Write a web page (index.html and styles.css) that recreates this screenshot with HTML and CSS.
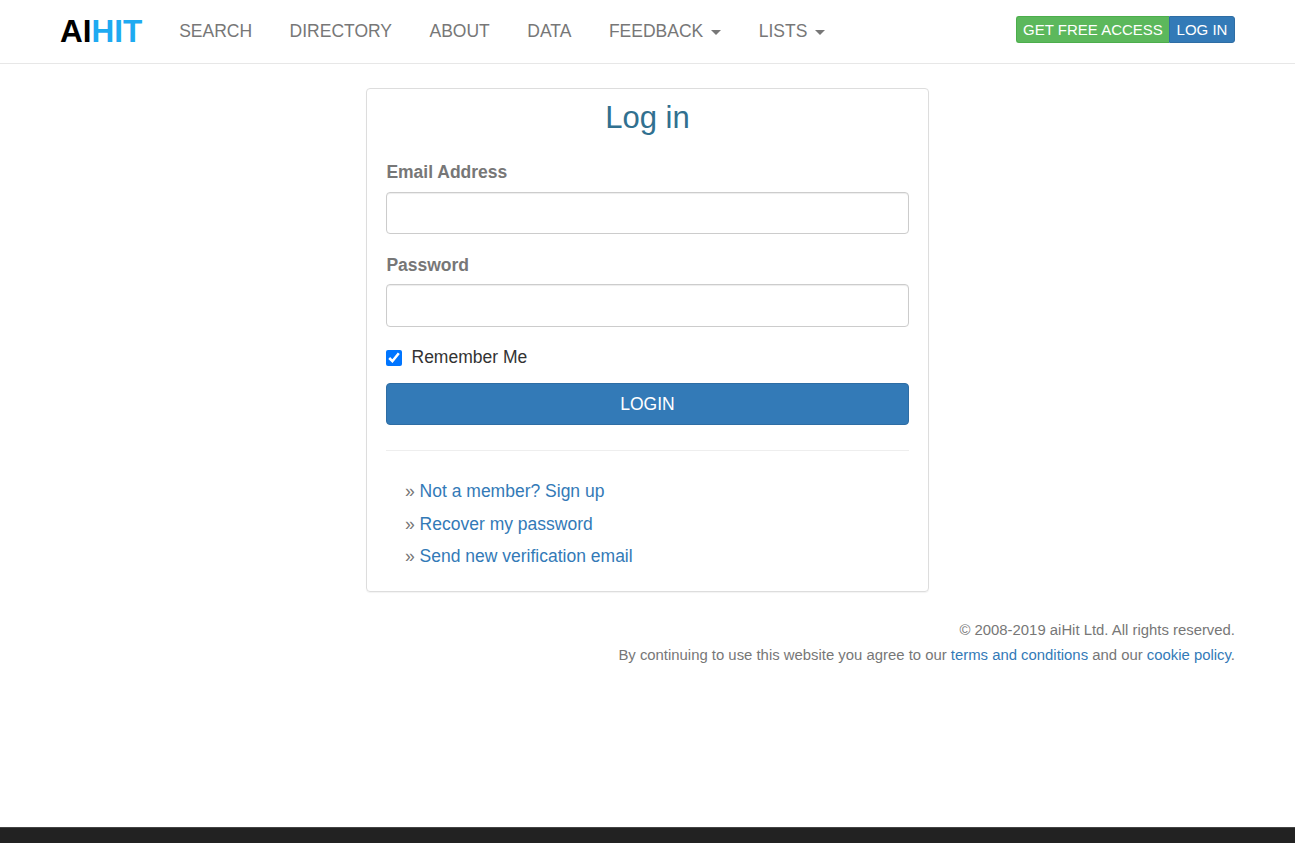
FILE: index.html
```html
<!DOCTYPE html>
<html lang="en">
<head>
<meta charset="utf-8">
<title>aiHit - Log in</title>
<link rel="stylesheet" href="styles.css">
</head>
<body>
<header class="navbar">
  <a class="brand" href="#">AI<span class="brand-accent">HIT</span></a>
  <nav class="nav">
    <a href="#">SEARCH</a>
    <a href="#">DIRECTORY</a>
    <a href="#">ABOUT</a>
    <a href="#">DATA</a>
    <a href="#">FEEDBACK<span class="caret"></span></a>
    <a href="#">LISTS<span class="caret"></span></a>
  </nav>
  <div class="actions">
    <a class="action signup" href="#">GET FREE ACCESS</a>
    <a class="action signin" href="#">LOG IN</a>
  </div>
</header>
<main class="panel">
  <h1 class="title">Log in</h1>
  <form>
    <label class="label" for="email">Email Address</label>
    <input class="field" id="email" type="text">
    <label class="label label-password" for="password">Password</label>
    <input class="field field-password" id="password" type="password">
    <label class="remember">
      <input class="check" type="checkbox" checked>
      <span>Remember Me</span>
    </label>
    <button class="submit" type="button">LOGIN</button>
  </form>
  <ul class="links">
    <li>» <a href="#">Not a member? Sign up</a></li>
    <li>» <a href="#">Recover my password</a></li>
    <li>» <a href="#">Send new verification email</a></li>
  </ul>
</main>
<footer class="legal">
  <p>© 2008-2019 aiHit Ltd. All rights reserved.</p>
  <p>By continuing to use this website you agree to our <a href="#">terms and conditions</a> and our <a href="#">cookie policy</a>.</p>
</footer>
<div class="bottom-bar"></div>
</body>
</html>
```
FILE: styles.css
```css
* { box-sizing: border-box; }
body {
  margin: 0;
  height: 843px;
  display: flex;
  flex-direction: column;
  overflow: hidden;
  background: #fff;
  color: #777;
  font: 17.5px/26px "Liberation Sans", Arial, sans-serif;
}
a { color: #337ab7; text-decoration: none; }
.navbar {
  height: 64px;
  padding: 0 60px;
  display: flex;
  border-bottom: 1px solid #e7e7e7;
}
.brand {
  width: 82px;
  color: #000;
  font-size: 31.5px;
  font-weight: bold;
  line-height: 62px;
}
.brand-accent { color: #1eaaf1; }
.nav { display: flex; margin-left: 18.4px; }
.nav a {
  display: flex;
  align-items: center;
  height: 61px;
  padding: 0 18.75px;
  color: #777;
}
.caret {
  margin: 3px 0 0 8px;
  border-top: 5px solid #777;
  border-left: 5px solid transparent;
  border-right: 5px solid transparent;
}
.actions { display: flex; margin: 16px 0 0 auto; height: 27px; }
.action {
  border: 1px solid;
  color: #fff;
  font-size: 15px;
  line-height: 26px;
  text-align: center;
  white-space: nowrap;
}
.signup { width: 153px; background: #5cb85c; border-color: #4cae4c; border-right: 0; border-radius: 3px 0 0 3px; }
.signin { width: 66px; background: #337ab7; border-color: #2e6da4; border-radius: 0 3px 3px 0; }
.panel {
  width: 563px;
  height: 504px;
  margin: 24px auto 0;
  padding: 10px 19px 0;
  border: 1px solid #ddd;
  border-radius: 4px;
  box-shadow: 0 1px 1px rgba(0, 0, 0, .05);
}
.title {
  margin: 0 0 22px;
  color: #31708f;
  font-size: 31px;
  font-weight: normal;
  line-height: 38px;
  text-align: center;
}
.label { display: block; margin-bottom: 7px; padding-left: .4px; font-weight: bold; }
.label-password { padding-top: 1px; margin-bottom: 6px; }
.field {
  display: block;
  width: 100%;
  height: 42px;
  margin: 0 0 17px;
  border: 1px solid #ccc;
  border-radius: 4px;
  box-shadow: inset 0 1px 1px rgba(0, 0, 0, .075);
}
.field-password { height: 43px; }
.remember { display: flex; align-items: center; height: 26px; color: #333; }
.check { width: 16px; height: 16px; margin: 2px 9.5px 0 0; }
.submit {
  display: block;
  width: 100%;
  height: 42px;
  margin: 13px 0 25px;
  border: 1px solid #2e6da4;
  border-radius: 4px;
  background: #337ab7;
  color: #fff;
  font: inherit;
}
.links {
  margin: 0;
  padding: 24px 19px 0;
  border-top: 1px solid #eee;
  list-style: none;
}
.links li { line-height: 32.5px; }
.legal {
  padding: 26px 60px 0 0;
  font-size: 14.88px;
  line-height: 25px;
  text-align: right;
}
.legal p { margin: 0; }
.bottom-bar {
  height: 16px;
  margin-top: auto;
  border-top: 1px solid #444;
  background: #222;
}
```
